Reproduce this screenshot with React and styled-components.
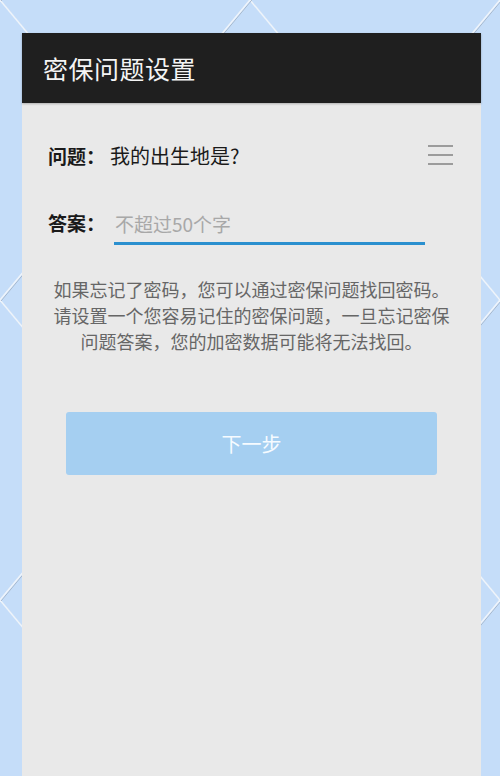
import React from "react";
import styled, { createGlobalStyle } from "styled-components";

const GlobalStyle = createGlobalStyle`
  html, body {
    margin: 0;
    padding: 0;
    background: #c5ddf9;
  }
  body {
    font-family: "Noto Sans CJK SC", "Noto Sans", sans-serif;
  }
`;

const Page = styled.div`
  position: relative;
  width: 500px;
  height: 776px;
  overflow: hidden;
  background: #c5ddf9;
  padding-top: 33px;
  box-sizing: border-box;
`;

const Backdrop = styled.svg`
  position: absolute;
  top: 0;
  left: 0;
  pointer-events: none;
`;

const Card = styled.div`
  position: relative;
  margin-left: 22px;
  width: 459px;
  height: 743px;
  background: #e9e9e9;
  display: flex;
  flex-direction: column;
`;

const Header = styled.div`
  height: 70px;
  background: #1f1f1f;
  display: flex;
  align-items: center;
  padding-left: 21px;
  box-shadow: 0 1px 2px rgba(0, 0, 0, 0.25);
`;

const Title = styled.h1`
  margin: 0;
  color: #f4f4f4;
  font-size: 25px;
  font-weight: 400;
  letter-spacing: 0.5px;
`;

const Body = styled.div`
  padding: 32px 26px 0 26px;
  display: flex;
  flex-direction: column;
`;

const Row = styled.div`
  display: flex;
  align-items: center;
  height: 40px;
  margin-bottom: ${(p) => p.$gap || 0}px;
`;

const Label = styled.span`
  font-size: 19px;
  font-weight: 700;
  color: #1a1a1a;
  width: 62px;
  flex-shrink: 0;
`;

const Value = styled.span`
  font-size: 20px;
  color: #1a1a1a;
  flex: 1;
`;

const MenuButton = styled.button`
  width: 25px;
  height: 20px;
  padding: 0;
  border: 0;
  background: transparent;
  display: flex;
  flex-direction: column;
  justify-content: space-between;
  margin-right: 2px;
  cursor: pointer;
`;

const MenuLine = styled.span`
  display: block;
  height: 2px;
  background: #9c9c9c;
`;

const InputWrap = styled.div`
  width: 311px;
  margin-left: 4px;
  border-bottom: 3px solid #2b90cf;
  height: 36px;
  display: flex;
  align-items: flex-end;
  margin-top: 6px;
`;

const Input = styled.input`
  width: 100%;
  border: 0;
  outline: none;
  background: transparent;
  font-family: "Noto Sans CJK SC", "Noto Sans", sans-serif;
  font-size: 19px;
  padding: 0 0 5px 1px;
  color: #333;
  &::placeholder {
    color: #a8a8a8;
  }
`;

const Note = styled.p`
  margin: 0;
  text-align: center;
  font-size: 18px;
  line-height: 26px;
  color: #666666;
`;

const NextButton = styled.button`
  margin: 58px 0 0 44px;
  width: 371px;
  height: 63px;
  border: 0;
  border-radius: 3px;
  background: #a5cff1;
  color: #f6fbff;
  font-family: "Noto Sans CJK SC", "Noto Sans", sans-serif;
  font-size: 20px;
  cursor: pointer;
`;

function Lattice() {
  const lines = [];
  for (let j = -4; j <= 4; j++) {
    // slope +1.2
    lines.push([0, 300 * j, 500, 600 + 300 * j]);
    // slope -1.2
    lines.push([0, 300 * j, 500, 300 * j - 600]);
  }
  return (
    <Backdrop width="500" height="776" viewBox="0 0 500 776">
      {lines.map((l, i) => (
        <g key={i}>
          <line x1={l[0] + 1} y1={l[1] + 1} x2={l[2] + 1} y2={l[3] + 1} stroke="#a7b8cc" strokeWidth="1" />
          <line x1={l[0]} y1={l[1]} x2={l[2]} y2={l[3]} stroke="#eef4fb" strokeWidth="1.6" />
        </g>
      ))}
    </Backdrop>
  );
}

export default function App() {
  return (
    <>
      <GlobalStyle />
      <Page>
        <Lattice />
        <Card>
          <Header>
            <Title>密保问题设置</Title>
          </Header>
          <Body>
            <Row $gap={27}>
              <Label>问题：</Label>
              <Value>我的出生地是?</Value>
              <MenuButton aria-label="选择问题">
                <MenuLine />
                <MenuLine />
                <MenuLine />
              </MenuButton>
            </Row>
            <Row $gap={34}>
              <Label>答案：</Label>
              <InputWrap>
                <Input placeholder="不超过50个字" />
              </InputWrap>
            </Row>
            <Note>
              如果忘记了密码，您可以通过密保问题找回密码。
              <br />
              请设置一个您容易记住的密保问题，一旦忘记密保
              <br />
              问题答案，您的加密数据可能将无法找回。
            </Note>
          </Body>
          <NextButton>下一步</NextButton>
        </Card>
      </Page>
    </>
  );
}
